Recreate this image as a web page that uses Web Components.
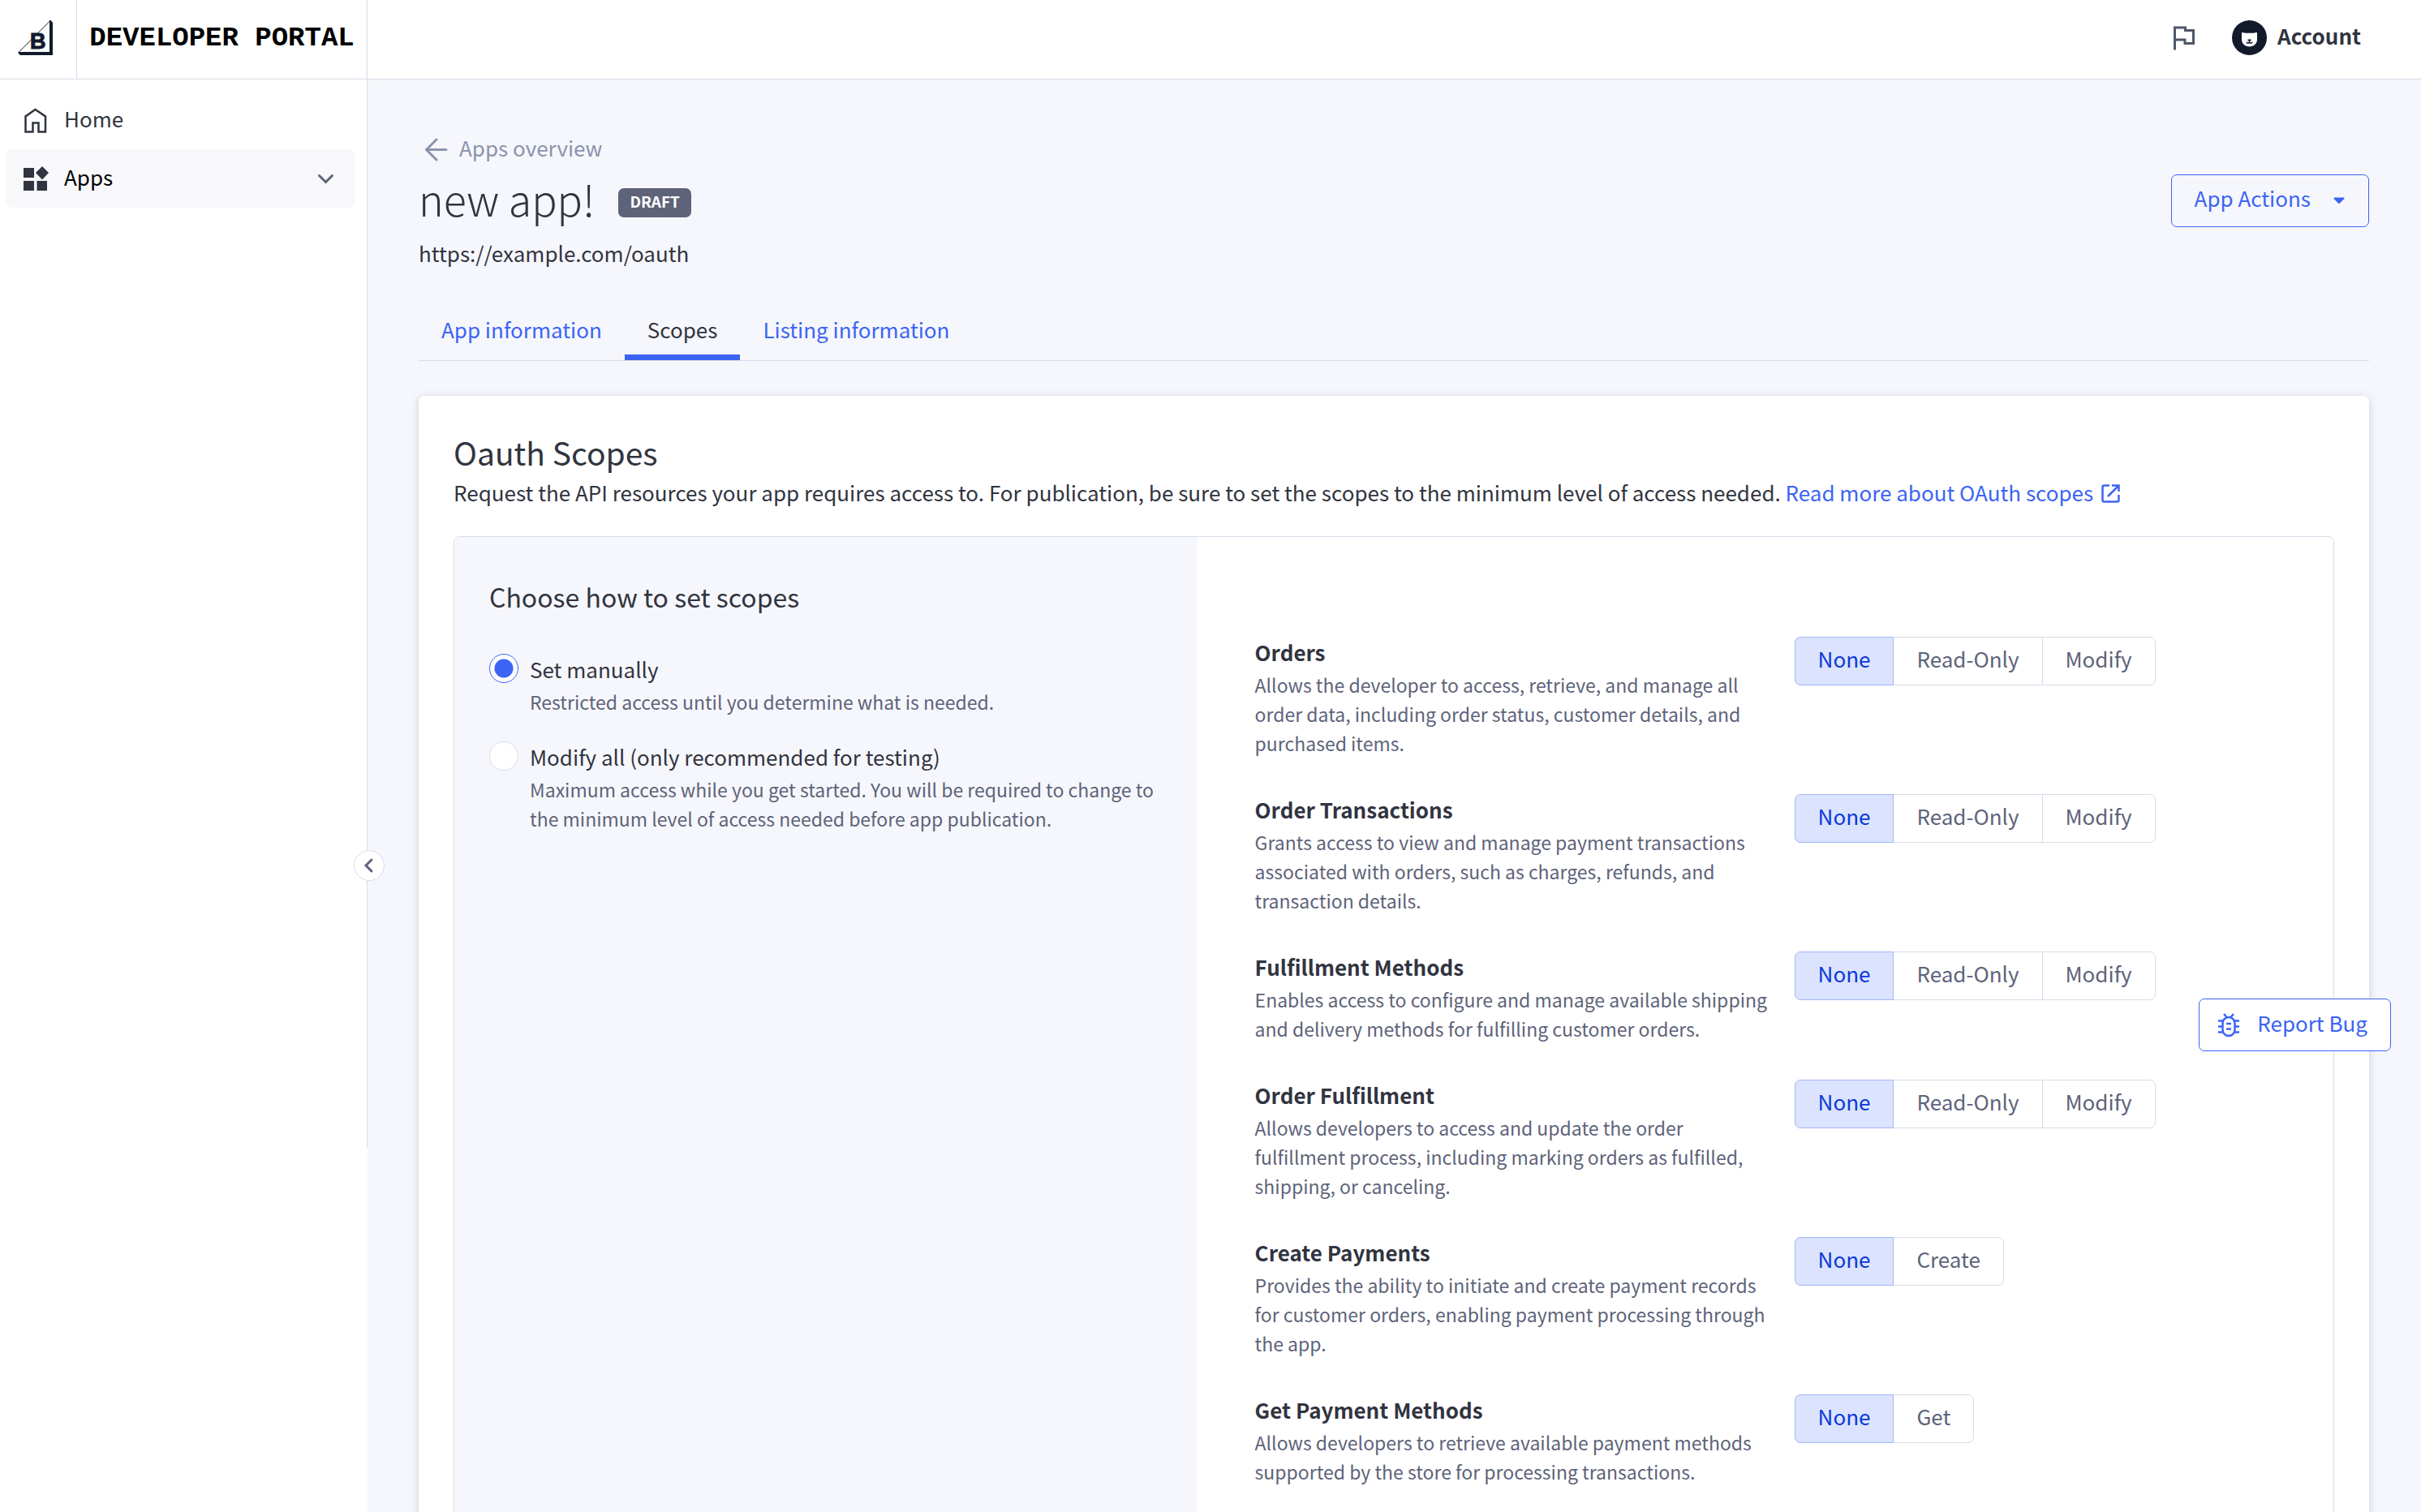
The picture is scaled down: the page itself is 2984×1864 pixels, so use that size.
<!DOCTYPE html>
<html lang="en">
<head>
<meta charset="UTF-8">
<meta name="viewport" content="width=device-width, initial-scale=1.0">
<title>Developer Portal</title>
<style>
  :root {
    --primary: #3c64f4;
    --primary-dark: #0b38d9;
    --primary-light: #dbe3fe;
    --text: #313440;
    --muted: #5e637a;
    --soft: #8c93ad;
    --line: #d9dce9;
    --bg: #f6f7fc;
  }
  body {
    margin: 0;
    background: var(--bg);
    color: var(--text);
    font-family: "Noto Sans CJK SC", "Noto Sans", sans-serif;
    font-size: 26px;
    line-height: 36px;
  }
</style>
</head>
<body>
<portal-app></portal-app>

<script>
class PortalHeader extends HTMLElement {
  constructor() {
    super();
    this.attachShadow({ mode: 'open' });
    this.shadowRoot.innerHTML = `
      <style>
        :host { display: block; }
        header {
          display: flex;
          height: 97px;
          background: white;
          border-bottom: 1px solid var(--line);
        }
        .logo, .brand, .right { display: flex; align-items: center; }
        .logo { width: 94px; box-sizing: border-box; padding-left: 22px; padding-bottom: 4px; }
        .brand {
          width: 359px;
          justify-content: center;
          padding-bottom: 4px;
          box-sizing: border-box;
          border: solid var(--line);
          border-width: 0 1px;
          color: #000;
          font: bold 34px/40px "Liberation Mono", monospace;
          white-space: nowrap;
          text-decoration: none;
        }
        .right { margin-left: auto; padding: 0 74px 4px 0; gap: 42px; }
        button {
          display: flex;
          align-items: center;
          gap: 13px;
          padding: 0;
          border: 0;
          background: none;
          font: inherit;
          font-weight: bold;
          color: var(--text);
        }
        button span { padding-bottom: 5px; }
        svg { display: block; }
      </style>
      <header>
        <a class="logo" href="#" aria-label="Home">
          <svg width="43" height="43" viewBox="0 0 43 43">
            <path d="M1 39.500 40 .5" stroke="#121a2c" stroke-width="1"/>
            <path d="M39 0h1.500L43 3v40H3L0 40l1-1h38z" fill="#121a2c"/>
            <text x="15" y="35" font-family="Liberation Sans" font-weight="bold" font-size="27" fill="#121a2c" stroke="#121a2c">B</text>
          </svg>
        </a>
        <a class="brand" href="#">DEVELOPER PORTAL</a>
        <div class="right">
          <button aria-label="What's new">
            <svg width="34" height="34" viewBox="0 0 34 34">
              <path d="M5.500 31.500V4h13v3.500H28.500v16H18V19H5.500" fill="none" stroke="#4e5867" stroke-width="3"/>
            </svg>
          </button>
          <button>
            <svg width="43" height="43" viewBox="0 0 43 43">
              <circle cx="21.500" cy="21.500" r="21.500" fill="#121a2c"/>
              <path d="M12 15l5 .8h9l5-.8v9c0 5-5 8.500-9.500 8.500S12 29 12 24z" fill="white"/>
              <path d="M19.500 24h4l-2 2zM21.500 25v2.500" fill="#121a2c" stroke="#121a2c"/>
              <path d="M18 27c1 1.500 2.500 1.500 3.500 0 1 1.500 2.500 1.500 3.500 0" fill="none" stroke="#121a2c" stroke-width="1.500"/>
            </svg>
            <span>Account</span>
          </button>
        </div>
      </header>`;
  }
}
customElements.define('portal-header', PortalHeader);


class PortalSidebar extends HTMLElement {
  constructor() {
    super();
    this.attachShadow({ mode: 'open' });
    this.shadowRoot.innerHTML = `
      <style>
        :host { display: block; position: relative; background: white; }
        nav {
          height: calc(76vh - 100px);
          box-sizing: border-box;
          padding: 14px 14px 0 7px;
          border-right: 1px solid var(--line);
        }
        a {
          display: flex;
          align-items: center;
          height: 72px;
          padding: 0 23px 0 18px;
          gap: 18px;
          border-radius: 8px;
          color: var(--text);
          text-decoration: none;
        }
        a.active { background: #f8f8fb; color: #000; }
        a span { flex: 1; padding-bottom: 5px; }
        svg { display: block; }
        button {
          position: absolute;
          top: 950px;
          right: -21px;
          width: 38px;
          height: 38px;
          padding: 0;
          display: grid;
          place-items: center;
          background: white;
          border: 1px solid var(--line);
          border-radius: 50%;
        }
      </style>
      <nav>
        <a href="#">
          <svg width="36" height="36" viewBox="0 0 36 36">
            <path d="M6.500 32.500v-19L18.500 5 31 13.500v19h-8.500v-11h-7v11z" fill="none" stroke="#313440" stroke-width="2.500"/>
          </svg>
          <span>Home</span>
        </a>
        <a class="active" href="#">
          <svg width="36" height="36" viewBox="0 0 36 36" fill="#313440">
            <path d="M4 5h13v12H4zM4 21h13v12H4zM20.500 21h12.500v12H20.500zM27 3l8 8-8 8.500-8-8.500z"/>
          </svg>
          <span>Apps</span>
          <svg width="26" height="26" viewBox="0 0 26 26">
            <path d="M4.500 9.500l8 8 8-8" fill="none" stroke="#5e637a" stroke-width="3" stroke-linecap="round"/>
          </svg>
        </a>
      </nav>
      <button aria-label="Collapse menu">
        <svg width="20" height="20" viewBox="0 0 20 20">
          <path d="M13 3l-7 7 7 7" fill="none" stroke="#5e637a" stroke-width="3" stroke-linecap="round"/>
        </svg>
      </button>`;
  }
}
customElements.define('portal-sidebar', PortalSidebar);


class AppHeading extends HTMLElement {
  constructor() {
    super();
    this.attachShadow({ mode: 'open' });
    this.shadowRoot.innerHTML = `
      <style>
        :host { display: flex; justify-content: space-between; align-items: center; }
        .back {
          display: flex;
          width: fit-content;
          align-items: center;
          gap: 10px;
          padding-left: 4px;
          color: var(--soft);
          text-decoration: none;
        }
        svg { display: block; }
        .title { display: flex; align-items: center; gap: 29px; margin-top: 5px; }
        h1 { margin: 0; font-size: 52px; line-height: 80px; font-weight: 300; }
        .badge {
          margin-top: 10px;
          padding: 0 14px 4px;
          background: var(--muted);
          border-radius: 7px;
          color: white;
          font-size: 19px;
          line-height: 32px;
          font-weight: bold;
        }
        p { margin: 9px 0 0; }
        button {
          display: flex;
          align-items: center;
          gap: 22px;
          height: 65px;
          padding: 0 23px 0 28px;
          background: none;
          border: 1px solid var(--primary);
          border-radius: 7px;
          font: inherit;
          color: var(--primary);
        }
        button span { padding-bottom: 6px; }
      </style>
      <div>
        <a class="back" href="#">
          <svg width="36" height="36" viewBox="0 0 36 36">
            <path d="M18 8L5.500 20.500 18 33M5.500 20.500H30" fill="none" stroke="#8c93ad" stroke-width="3" stroke-linecap="round" stroke-linejoin="round"/>
          </svg>Apps overview
        </a>
        <div class="title"><h1>new app!</h1><span class="badge">DRAFT</span></div>
        <p>https://example.com/oauth</p>
      </div>
      <button>
        <span>App Actions</span>
        <svg width="26" height="26" viewBox="0 0 26 26">
          <path d="M7.500 10.500h11l-5.500 5.500z" fill="#3c64f4" stroke="#3c64f4" stroke-width="2" stroke-linejoin="round"/>
        </svg>
      </button>`;
  }
}
customElements.define('app-heading', AppHeading);


class AppTabs extends HTMLElement {
  constructor() {
    super();
    this.attachShadow({ mode: 'open' });
    this.shadowRoot.innerHTML = `
      <style>
        :host { display: block; margin: 44px 0 43px; border-bottom: 1px solid var(--line); }
        div { display: flex; }
        button {
          padding: 14px 28px 13px;
          background: none;
          border: 0;
          border-bottom: 7px solid transparent;
          font: inherit;
          color: var(--primary);
        }
        button[aria-selected="true"] { color: var(--text); border-color: var(--primary); }
      </style>
      <div role="tablist">
        <button role="tab">App information</button>
        <button role="tab" aria-selected="true">Scopes</button>
        <button role="tab">Listing information</button>
      </div>`;
  }
}
customElements.define('app-tabs', AppTabs);


class ScopeMode extends HTMLElement {
  constructor() {
    super();
    this.attachShadow({ mode: 'open' });
    this.shadowRoot.innerHTML = `
      <style>
        :host { display: block; padding: 43px; background: var(--bg); }
        h3 { margin: 0 0 41px; font-size: 32px; line-height: 60px; font-weight: normal; }
        .option {
          display: grid;
          grid-template-columns: 36px 1fr;
          gap: 3px 14px;
          margin-bottom: 31px;
        }
        input {
          appearance: none;
          width: 36px;
          height: 36px;
          margin: 0;
          background: white;
          border: 1px solid var(--line);
          border-radius: 50%;
        }
        input:checked {
          border-color: var(--primary);
          background: radial-gradient(circle, var(--primary) 11px, white 12px);
        }
        label { line-height: 38px; }
        p { grid-column: 2; margin: 0; font-size: 23px; line-height: 36px; color: var(--muted); }
      </style>
      <h3>Choose how to set scopes</h3>
      <div class="option">
        <input type="radio" name="mode" id="manual" checked>
        <label for="manual">Set manually</label>
        <p>Restricted access until you determine what is needed.</p>
      </div>
      <div class="option">
        <input type="radio" name="mode" id="all">
        <label for="all">Modify all (only recommended for testing)</label>
        <p>Maximum access while you get started. You will be required to change to the minimum level of access needed before app publication.</p>
      </div>`;
  }
}
customElements.define('scope-mode', ScopeMode);


// <scope-row name="Orders" levels="None,Read-Only,Modify">description</scope-row>
class ScopeRow extends HTMLElement {
  constructor() {
    super();
    this.attachShadow({ mode: 'open' });
  }

  connectedCallback() {
    const buttons = this.getAttribute('levels').split(',')
      .map((level, i) => `<button aria-pressed="${i === 0}">${level}</button>`)
      .join('');
    this.shadowRoot.innerHTML = `
      <style>
        :host {
          display: grid;
          grid-template-columns: minmax(0, 636px) 1fr;
          column-gap: 29px;
          align-items: start;
        }
        h4 { margin: 0 0 3px; font-size: 26px; line-height: 38px; font-weight: bold; }
        p { margin: 0; font-size: 23px; line-height: 36px; color: var(--muted); }
        .levels { display: flex; }
        button {
          padding: 8px 28px 14px;
          margin-left: -1px;
          background: white;
          border: 1px solid var(--line);
          font: inherit;
          color: var(--muted);
        }
        button:first-child { margin-left: 0; border-radius: 7px 0 0 7px; }
        button:last-child { border-radius: 0 7px 7px 0; }
        button[aria-pressed="true"] {
          position: relative;
          background: var(--primary-light);
          border-color: #a3b6f5;
          color: var(--primary-dark);
        }
      </style>
      <div>
        <h4>${this.getAttribute('name')}</h4>
        <p><slot></slot></p>
      </div>
      <div class="levels" role="group" aria-label="${this.getAttribute('name')}">${buttons}</div>`;
  }
}
customElements.define('scope-row', ScopeRow);


class ScopesCard extends HTMLElement {
  constructor() {
    super();
    this.attachShadow({ mode: 'open' });
    this.shadowRoot.innerHTML = `
      <style>
        :host {
          display: block;
          padding: 43px;
          background: white;
          border-radius: 7px;
          box-shadow: 0 2px 11px rgba(49, 52, 64, 0.2);
        }
        h2 { margin: 0 0 2px; font-size: 39px; line-height: 52px; font-weight: normal; }
        .intro { margin: 0 0 32px; line-height: 44px; }
        a { color: var(--primary); text-decoration: none; }
        a svg { vertical-align: -6px; }
        .panel {
          display: grid;
          grid-template-columns: 915fr 1402fr;
          border: 1px solid var(--line);
          border-radius: 7px;
          overflow: hidden;
        }
        .rows { display: grid; gap: 45px; padding: 123px 72px 72px; }
      </style>
      <h2>Oauth Scopes</h2>
      <p class="intro">Request the API resources your app requires access to. For publication, be sure to set the scopes to the minimum level of access needed.
        <a href="#">Read more about OAuth scopes
          <svg width="30" height="30" viewBox="0 0 30 30">
            <path d="M14 4.500H7.500Q5.500 4.500 5.500 6.500v16q0 2 2 2h16q2 0 2-2V16M17 4.500h8.500V12M25 5L12 18" fill="none" stroke="#3c64f4" stroke-width="2.500"/>
          </svg>
        </a>
      </p>
      <div class="panel">
        <scope-mode></scope-mode>
        <div class="rows">
          <scope-row name="Orders" levels="None,Read-Only,Modify">Allows the developer to access, retrieve, and manage all order data, including order status, customer details, and purchased items.</scope-row>
          <scope-row name="Order Transactions" levels="None,Read-Only,Modify">Grants access to view and manage payment transactions associated with orders, such as charges, refunds, and transaction details.</scope-row>
          <scope-row name="Fulfillment Methods" levels="None,Read-Only,Modify">Enables access to configure and manage available shipping and delivery methods for fulfilling customer orders.</scope-row>
          <scope-row name="Order Fulfillment" levels="None,Read-Only,Modify">Allows developers to access and update the order fulfillment process, including marking orders as fulfilled, shipping, or canceling.</scope-row>
          <scope-row name="Create Payments" levels="None,Create">Provides the ability to initiate and create payment records for customer orders, enabling payment processing through the app.</scope-row>
          <scope-row name="Get Payment Methods" levels="None,Get">Allows developers to retrieve available payment methods supported by the store for processing transactions.</scope-row>
        </div>
      </div>`;
  }
}
customElements.define('scopes-card', ScopesCard);


class ReportBug extends HTMLElement {
  constructor() {
    super();
    this.attachShadow({ mode: 'open' });
    this.shadowRoot.innerHTML = `
      <style>
        :host { position: fixed; right: 37px; bottom: 568px; }
        button {
          display: flex;
          align-items: center;
          gap: 17px;
          height: 65px;
          padding: 0 28px 0 18px;
          background: white;
          border: 1px solid var(--primary);
          border-radius: 7px;
          font: inherit;
          color: var(--primary);
        }
        span { padding-bottom: 6px; }
        svg { display: block; }
      </style>
      <button>
        <svg width="36" height="36" viewBox="0 0 36 36" fill="none" stroke="#3c64f4" stroke-width="2.500">
          <rect x="10.500" y="8" width="15" height="23" rx="7.500"/>
          <path d="M15 16h6M15 22.500h6M5 12.500h6M5 19.500h5.500M5 26.500h6M25 12.500h6M25.500 19.500h5.500M25 26.500h6M12 4l4 4.500M24 4l-4 4.500"/>
        </svg>
        <span>Report Bug</span>
      </button>`;
  }
}
customElements.define('report-bug', ReportBug);


class PortalApp extends HTMLElement {
  constructor() {
    super();
    this.attachShadow({ mode: 'open' });
    this.shadowRoot.innerHTML = `
      <style>
        :host { display: block; height: 100vh; overflow: hidden; }
        .body { display: grid; grid-template-columns: 453px minmax(0, 1fr); }
        main { padding: 66px 64px 66px 63px; }
      </style>
      <portal-header></portal-header>
      <div class="body">
        <portal-sidebar></portal-sidebar>
        <main>
          <app-heading></app-heading>
          <app-tabs></app-tabs>
          <scopes-card></scopes-card>
        </main>
      </div>
      <report-bug></report-bug>`;
  }
}
customElements.define('portal-app', PortalApp);
</script>
</body>
</html>
